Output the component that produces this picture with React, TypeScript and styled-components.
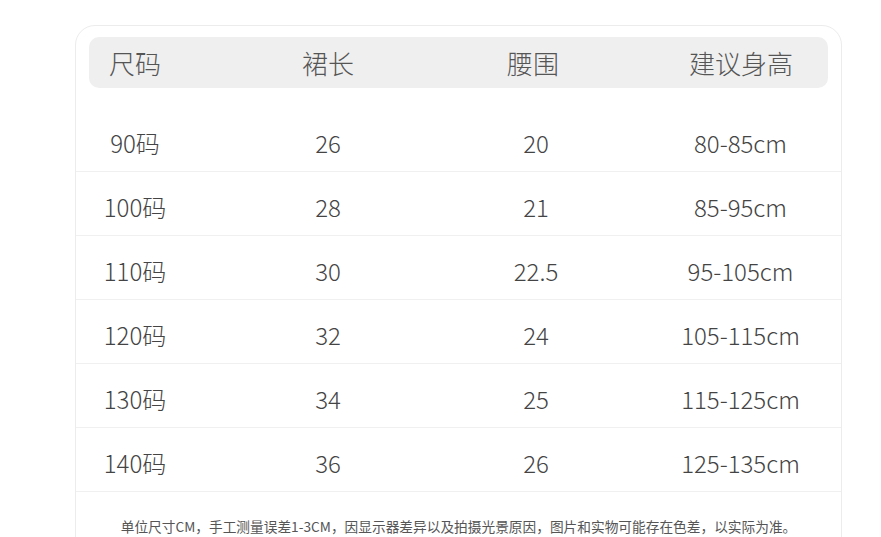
import React from "react";
import styled, { createGlobalStyle } from "styled-components";

const Global = createGlobalStyle`
  html, body { margin: 0; padding: 0; background: #ffffff; overflow: hidden; }
  body { font-family: "Noto Sans CJK SC", "Noto Sans", sans-serif; }
`;

const Page = styled.div`
  padding: 25px 0 0 75px;
  width: 881px;
  height: 537px;
  box-sizing: border-box;
`;

const Card = styled.div`
  width: 767px;
  height: 560px;
  box-sizing: border-box;
  border: 1px solid #ececec;
  border-radius: 20px;
  background: #fff;
`;

const HeaderBar = styled.div`
  margin: 11px 13px 0;
  height: 51px;
  background: #efefef;
  border-radius: 10px;
  display: grid;
  grid-template-columns: 92px 294px 116px 1fr;
  align-items: center;
`;

const HeadCell = styled.div<{ $pad?: number }>`
  text-align: center;
  padding-left: ${(p) => p.$pad ?? 0}px;
  font-size: 26px;
  line-height: 30px;
  font-weight: 300;
  color: #555;
  white-space: nowrap;
`;

const Body = styled.div`
  margin-top: 20px;
`;

const Row = styled.div`
  height: 64px;
  box-sizing: border-box;
  padding-top: 6px;
  border-bottom: 1px solid #f0f0f0;
  display: grid;
  grid-template-columns: 118px 268px 148px 1fr;
  align-items: center;
`;

const Cell = styled.div<{ $pad?: number }>`
  text-align: center;
  padding-left: ${(p) => p.$pad ?? 0}px;
  font-size: 24px;
  line-height: 28px;
  font-weight: 300;
  color: #444;
  white-space: nowrap;
`;

const Note = styled.div`
  padding-top: 24px;
  text-align: center;
  font-size: 13.7px;
  line-height: 20px;
  color: #555;
  white-space: nowrap;
`;

const rows = [
  ["90码", "26", "20", "80-85cm"],
  ["100码", "28", "21", "85-95cm"],
  ["110码", "30", "22.5", "95-105cm"],
  ["120码", "32", "24", "105-115cm"],
  ["130码", "34", "25", "115-125cm"],
  ["140码", "36", "26", "125-135cm"],
];

export default function App() {
  return (
    <Page>
      <Global />
      <Card>
        <HeaderBar>
          <HeadCell>尺码</HeadCell>
          <HeadCell>裙长</HeadCell>
          <HeadCell>腰围</HeadCell>
          <HeadCell $pad={63}>建议身高</HeadCell>
        </HeaderBar>
        <Body>
          {rows.map((r) => (
            <Row key={r[0]}>
              <Cell>{r[0]}</Cell>
              <Cell>{r[1]}</Cell>
              <Cell>{r[2]}</Cell>
              <Cell $pad={30}>{r[3]}</Cell>
            </Row>
          ))}
        </Body>
        <Note>
          单位尺寸CM，手工测量误差1-3CM，因显示器差异以及拍摄光景原因，图片和实物可能存在色差，以实际为准。
        </Note>
      </Card>
    </Page>
  );
}
